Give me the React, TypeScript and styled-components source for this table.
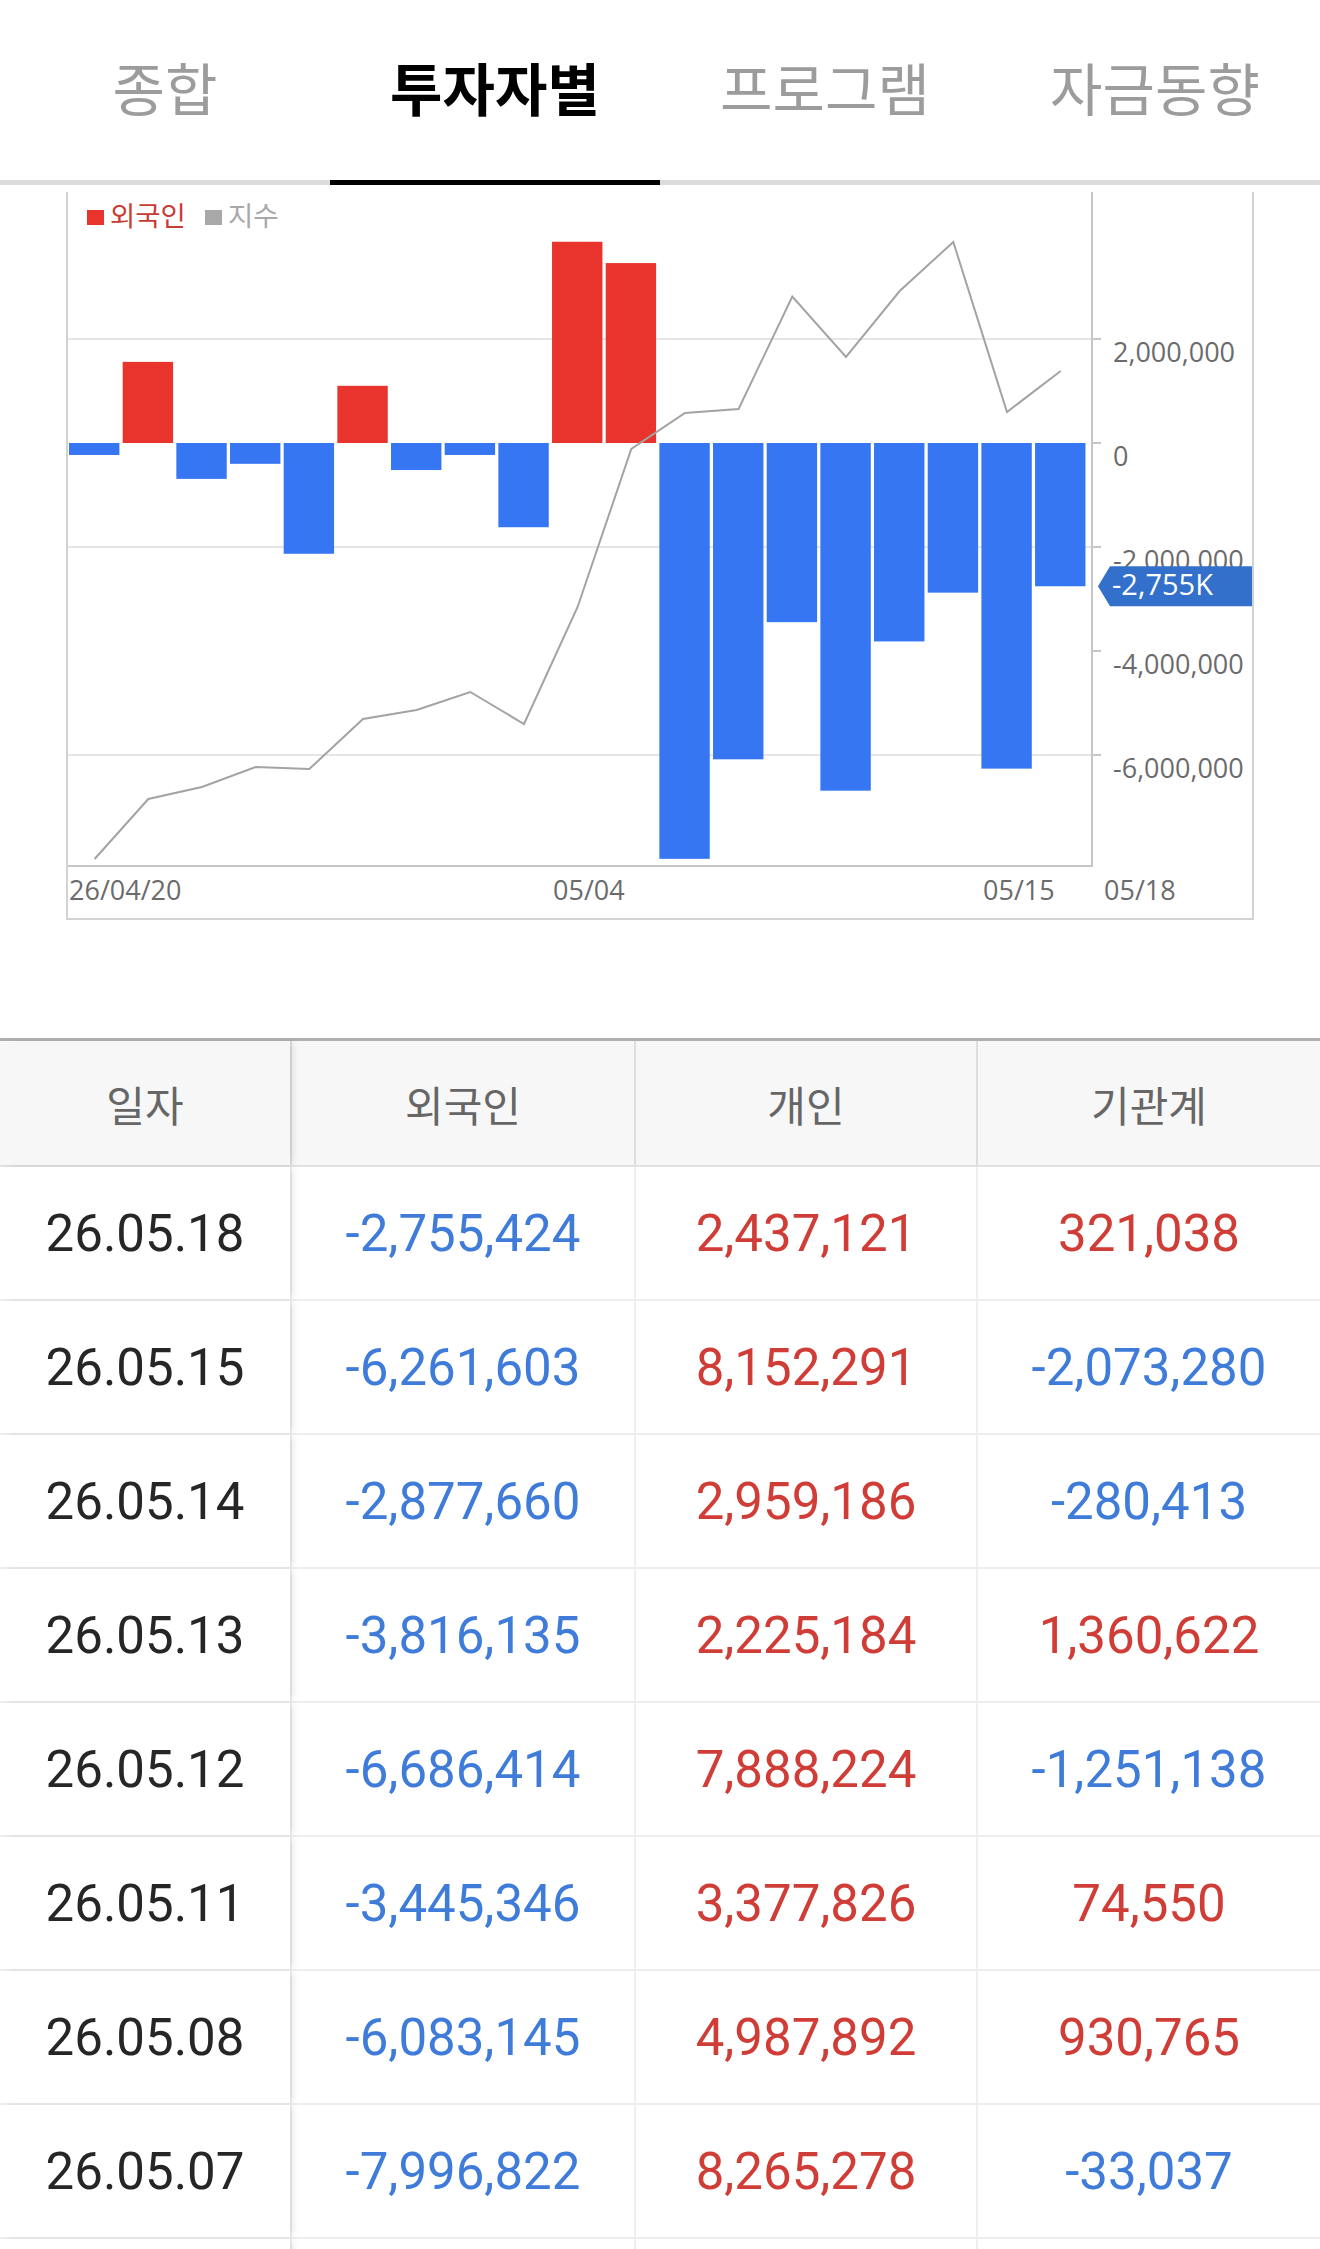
import React, { FC } from 'react';
import styled, { createGlobalStyle } from 'styled-components';

const GlobalStyle = createGlobalStyle`
  html, body {
    margin: 0;
    padding: 0;
    background: #fff;
  }
  body {
    font-family: Roboto, "Noto Sans CJK KR", sans-serif;
  }
`;

const Page = styled.div`
  width: 1320px;
  background: #fff;
`;

/* ---------- tabs ---------- */

const TabBar = styled.nav`
  display: grid;
  grid-template-columns: repeat(4, 1fr);
  height: 185px;
`;

const Tab = styled.div<{ $active?: boolean }>`
  display: flex;
  align-items: center;
  justify-content: center;
  padding-bottom: 8px;
  box-sizing: border-box;
  border-bottom: 5px solid ${({ $active }) => ($active ? '#000' : '#dcdcdc')};
  font-family: "Noto Sans CJK KR", sans-serif;
  font-size: 57px;
  font-weight: ${({ $active }) => ($active ? 700 : 400)};
  color: ${({ $active }) => ($active ? '#000' : '#9c9c9c')};
`;

/* ---------- chart ---------- */

const ChartFrame = styled.section`
  position: relative;
  margin: 7px 0 0 66px;
  width: 1188px;
  height: 728px;
  box-sizing: border-box;
  border: solid #d2d2d2;
  border-width: 0 2px 2px 2px;
  overflow: hidden;

  svg {
    display: block;
  }
`;

const Legend = styled.div`
  position: absolute;
  top: 7px;
  left: 19px;
  display: flex;
  align-items: center;
  gap: 19px;
  font-family: "Noto Sans CJK KR", sans-serif;
  font-size: 27.5px;
  line-height: 30px;
`;

const LegendItem = styled.span<{ $color: string }>`
  display: flex;
  align-items: center;
  gap: 6px;
  color: ${({ $color }) => $color};
`;

const Swatch = styled.i<{ $color: string }>`
  display: block;
  width: 17px;
  height: 15px;
  margin-top: 6px;
  background: ${({ $color }) => $color};
`;

const BLUE = '#3676f2';
const RED = '#e8342c';

const bars = [
  -0.23, 1.56, -0.69, -0.4, -2.13, 1.1, -0.52, -0.23, -1.62, 3.87, 3.46, -7.997, -6.083, -3.445,
  -6.686, -3.816, -2.878, -6.262, -2.755,
];
const indexY = [
  667, 607, 595, 575, 577, 527, 518, 500, 532, 415, 257, 221, 217, 104.5, 165, 99, 50, 220, 179,
];

const SLOT = 53.67;
const BAR_W = 50.4;
const ZERO = 251;
const PER_M = 52;
const PLOT_R = 1024;
const PLOT_B = 674;

const yTicks = [
  { v: 2, label: '2,000,000', grid: true },
  { v: 0, label: '0', grid: false },
  { v: -2, label: '-2,000,000', grid: true },
  { v: -4, label: '-4,000,000', grid: false },
  { v: -6, label: '-6,000,000', grid: true },
];

const xLabels = [
  { x: 1, t: '26/04/20' },
  { x: 485, t: '05/04' },
  { x: 915, t: '05/15' },
  { x: 1036, t: '05/18' },
];

const Chart: FC = () => {
  const linePts = indexY.map((y, i) => `${(26.6 + i * SLOT).toFixed(1)},${y}`).join(' ');
  const last = bars[bars.length - 1];
  const tipY = ZERO - last * PER_M;

  return (
    <ChartFrame>
      <svg width="1184" height="726" viewBox="0 0 1184 726" fontFamily="'Open Sans', sans-serif">
        {yTicks
          .filter((t) => t.grid)
          .map((t) => (
            <line
              key={t.label}
              x1="0"
              x2={PLOT_R}
              y1={ZERO - t.v * PER_M}
              y2={ZERO - t.v * PER_M}
              stroke="#e6e6e6"
              strokeWidth="2"
            />
          ))}

        {bars.map((v, i) => {
          const h = Math.abs(v) * PER_M;
          return (
            <rect
              key={i}
              x={1 + i * SLOT}
              y={v > 0 ? ZERO - h : ZERO}
              width={BAR_W}
              height={h}
              fill={v > 0 ? RED : BLUE}
            />
          );
        })}

        <polyline points={linePts} fill="none" stroke="#a3a3a3" strokeWidth="2" />

        <line x1="0" x2={PLOT_R + 1} y1={PLOT_B} y2={PLOT_B} stroke="#c6c6c6" strokeWidth="2" />
        <line x1={PLOT_R} x2={PLOT_R} y1="0" y2={PLOT_B} stroke="#c6c6c6" strokeWidth="2" />

        {yTicks.map((t) => {
          const y = ZERO - t.v * PER_M;
          return (
            <g key={t.label}>
              <line x1={PLOT_R} x2={PLOT_R + 9} y1={y} y2={y} stroke="#c6c6c6" strokeWidth="2" />
              <text x="1045" y={y + 23} fontSize="27" fill="#6b6b6b">
                {t.label}
              </text>
            </g>
          );
        })}

        {xLabels.map((l) => (
          <text key={l.t} x={l.x} y="708" fontSize="27" fill="#6b6b6b">
            {l.t}
          </text>
        ))}

        <polygon
          points={`1030,${tipY} 1042,${tipY - 20} 1184,${tipY - 20} 1184,${tipY + 20} 1042,${tipY + 20}`}
          fill="#3370cc"
        />
        <text x="1044" y={tipY + 9} fontSize="29" fill="#fff">
          -2,755K
        </text>
      </svg>

      <Legend>
        <LegendItem $color="#c93a34">
          <Swatch $color={RED} />
          외국인
        </LegendItem>
        <LegendItem $color="#a8a8a8">
          <Swatch $color="#a8a8a8" />
          지수
        </LegendItem>
      </Legend>
    </ChartFrame>
  );
};

/* ---------- table ---------- */

const Table = styled.div`
  margin-top: 118px;
  border-top: 3px solid #b0b0b0;
`;

const Row = styled.div<{ $head?: boolean }>`
  display: grid;
  grid-template-columns: 290px 344px 342px 344px;
  height: ${({ $head }) => ($head ? '126px' : '134px')};
  box-sizing: border-box;
  border-bottom: 2px solid ${({ $head }) => ($head ? '#e2e2e2' : '#eeeeee')};
  background: ${({ $head }) => ($head ? '#f7f7f7' : '#fff')};
`;

const HeadCell = styled.div<{ $first?: boolean }>`
  position: relative;
  display: flex;
  align-items: center;
  justify-content: center;
  font-family: "Noto Sans CJK KR", sans-serif;
  font-size: 42px;
  color: #666;
  border-left: ${({ $first }) => ($first ? 'none' : '2px solid #dedede')};
  box-shadow: ${({ $first }) => ($first ? '5px 0 7px -2px rgba(0, 0, 0, 0.1)' : 'none')};
  z-index: ${({ $first }) => ($first ? 1 : 0)};
  background: #f7f7f7;
`;

const Cell = styled.div<{ $tone: 'date' | 'up' | 'down'; $first?: boolean }>`
  position: relative;
  display: flex;
  align-items: center;
  justify-content: center;
  font-family: Roboto, sans-serif;
  font-size: 51px;
  background: #fff;
  color: ${({ $tone }) => ($tone === 'date' ? '#262626' : $tone === 'up' ? '#cf3d36' : '#3f7bd9')};
  border-left: ${({ $first }) => ($first ? 'none' : '2px solid #efefef')};
  box-shadow: ${({ $first }) => ($first ? '5px 0 7px -2px rgba(0, 0, 0, 0.1)' : 'none')};
  z-index: ${({ $first }) => ($first ? 1 : 0)};
`;

const rows = [
  ['26.05.18', '-2,755,424', '2,437,121', '321,038'],
  ['26.05.15', '-6,261,603', '8,152,291', '-2,073,280'],
  ['26.05.14', '-2,877,660', '2,959,186', '-280,413'],
  ['26.05.13', '-3,816,135', '2,225,184', '1,360,622'],
  ['26.05.12', '-6,686,414', '7,888,224', '-1,251,138'],
  ['26.05.11', '-3,445,346', '3,377,826', '74,550'],
  ['26.05.08', '-6,083,145', '4,987,892', '930,765'],
  ['26.05.07', '-7,996,822', '8,265,278', '-33,037'],
  ['26.05.06', '3,462,517', '-3,108,904', '-412,776'],
];

const tone = (v: string) => (v.startsWith('-') ? 'down' : 'up');

const InvestorTable: FC = () => (
  <Table>
    <Row $head>
      <HeadCell $first>일자</HeadCell>
      <HeadCell>외국인</HeadCell>
      <HeadCell>개인</HeadCell>
      <HeadCell>기관계</HeadCell>
    </Row>
    {rows.map(([date, ...vals]) => (
      <Row key={date}>
        <Cell $tone="date" $first>
          {date}
        </Cell>
        {vals.map((v, i) => (
          <Cell key={i} $tone={tone(v)}>
            {v}
          </Cell>
        ))}
      </Row>
    ))}
  </Table>
);

const tabs = ['종합', '투자자별', '프로그램', '자금동향'];

const App: FC = () => (
  <Page>
    <GlobalStyle />
    <TabBar>
      {tabs.map((t) => (
        <Tab key={t} $active={t === '투자자별'}>
          {t}
        </Tab>
      ))}
    </TabBar>
    <Chart />
    <InvestorTable />
  </Page>
);

export default App;
